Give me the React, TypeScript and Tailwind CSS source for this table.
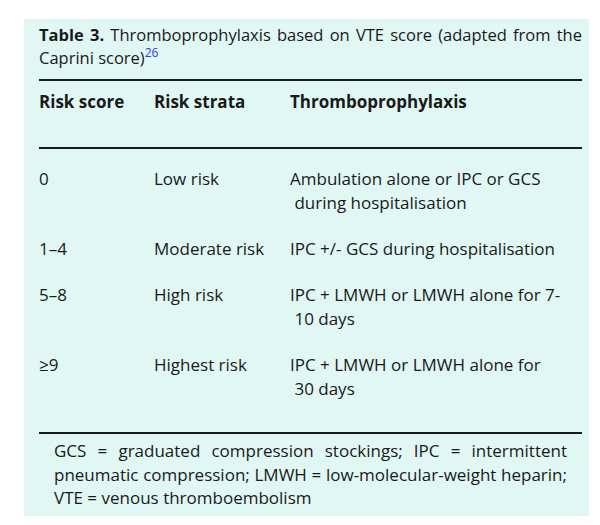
import React from "react";

type Row = {
    score: string;
    strata: string;
    lines: string[];
};

const rows: Row[] = [
    { score: "0", strata: "Low risk", lines: ["Ambulation alone or IPC or GCS", "\u00a0during hospitalisation"] },
    { score: "1–4", strata: "Moderate risk", lines: ["IPC +/- GCS during hospitalisation"] },
    { score: "5–8", strata: "High risk", lines: ["IPC + LMWH or LMWH alone for 7-", "\u00a010 days"] },
    { score: "≥9", strata: "Highest risk", lines: ["IPC + LMWH or LMWH alone for", "\u00a030 days"] },
];

export default function App() {
    return (
        <div className="min-h-[525px] bg-white pt-[19px] pl-[24px] font-['Open_Sans',sans-serif] text-[#1a1a1a]">
            <div className="w-[565px] h-[497px] bg-[#e0f7f4] pl-[15px] pr-[7px] pt-[4px]">
                {/* Caption */}
                <p className="text-[16.5px] leading-[23px] text-justify">
                    <span className="font-bold">Table 3.</span> Thromboprophylaxis based on VTE score (adapted from the
                    Caprini score)<sup className="text-[12px] text-[#3232ff] relative -top-[7px]">26</sup>
                </p>

                <div className="mt-[10px] h-[2px] bg-[#1a1a1a]" />

                {/* Header */}
                <div className="flex pt-[9px] pb-[33px] text-[17px] leading-[24px] font-bold">
                    <div className="w-[115px]">Risk score</div>
                    <div className="w-[136px]">Risk strata</div>
                    <div>Thromboprophylaxis</div>
                </div>

                <div className="h-[2px] bg-[#1a1a1a]" />

                {/* Body */}
                <div className="flex flex-col gap-[22px] pt-[18px] pb-[31px] text-[17px] leading-[24px]">
                    {rows.map((r) => (
                        <div key={r.score} className="flex">
                            <div className="w-[115px]">{r.score}</div>
                            <div className="w-[136px]">{r.strata}</div>
                            <div>
                                {r.lines.map((l) => (
                                    <div key={l}>{l}</div>
                                ))}
                            </div>
                        </div>
                    ))}
                </div>

                <div className="h-[2px] bg-[#1a1a1a]" />

                {/* Footnote */}
                <p className="pt-[5px] pl-[15px] pr-[15px] text-[17px] leading-[23.5px] text-justify">
                    GCS = graduated compression stockings; IPC = intermittent pneumatic compression; LMWH =
                    low-molecular-weight heparin; VTE = venous thromboembolism
                </p>
            </div>
        </div>
    );
}
